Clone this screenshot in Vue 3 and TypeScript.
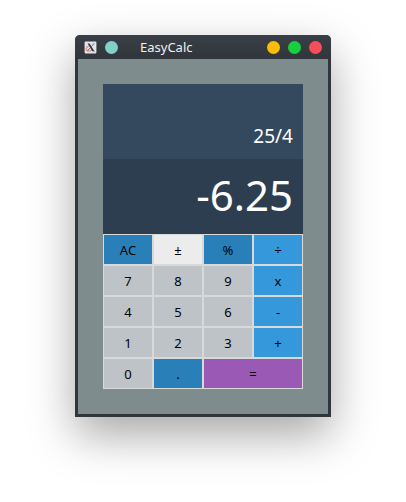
<script setup lang="ts">
interface Key {
  label: string
  kind: 'digit' | 'action' | 'sign' | 'operator' | 'equals'
}

const expression = '25/4'
const result = '-6.25'

const keys: Key[] = [
  { label: 'AC', kind: 'action' },
  { label: '±', kind: 'sign' },
  { label: '%', kind: 'action' },
  { label: '÷', kind: 'operator' },
  { label: '7', kind: 'digit' },
  { label: '8', kind: 'digit' },
  { label: '9', kind: 'digit' },
  { label: 'x', kind: 'operator' },
  { label: '4', kind: 'digit' },
  { label: '5', kind: 'digit' },
  { label: '6', kind: 'digit' },
  { label: '-', kind: 'operator' },
  { label: '1', kind: 'digit' },
  { label: '2', kind: 'digit' },
  { label: '3', kind: 'digit' },
  { label: '+', kind: 'operator' },
  { label: '0', kind: 'digit' },
  { label: '.', kind: 'action' },
  { label: '=', kind: 'equals' },
]
</script>

<template>
  <main class="desktop">
    <section class="window">
      <header class="titlebar">
        <svg class="app-icon" viewBox="0 0 13 13" aria-hidden="true">
          <rect x="0.6" y="0.6" width="11.8" height="11.8" rx="0.8" fill="#dfe5ee" />
          <path d="M4.6 5.2C2.4 6.2 1.7 8 2.6 9.3c1 1 3.4.9 5.4-.1M8.6 10.3l2.2.2" fill="none" stroke="#ea9375" stroke-width="1.3" />
          <path d="M3.6 2.4h2l4.6 7.6H8.2z" fill="#30343a" />
          <path d="M10.2 2.2 7.4 5.6M5.8 7.2 3.6 9.8" stroke="#5c6066" stroke-width="0.9" />
        </svg>
        <span class="dot pin"></span>
        <h1 class="title">EasyCalc</h1>
        <div class="controls">
          <span class="dot minimize"></span>
          <span class="dot maximize"></span>
          <span class="dot close"></span>
        </div>
      </header>
      <div class="body">
        <div class="expression">{{ expression }}</div>
        <div class="result">{{ result }}</div>
        <div class="keypad">
          <button v-for="key in keys" :key="key.label" type="button" class="key" :class="key.kind">{{ key.label }}</button>
        </div>
      </div>
    </section>
  </main>
</template>

<style>
body {
  background: #fff;
}
</style>

<style scoped>
.desktop {
  box-sizing: border-box;
  width: 406px;
  height: 502px;
  padding: 35px 75px 0;
  overflow: hidden;
  background: #fff;
  font-family: "Noto Sans", sans-serif;
}

.window {
  box-sizing: border-box;
  width: 256px;
  height: 382px;
  padding: 0 3px 3px;
  border-radius: 5px 5px 0 0;
  background: #31363b;
  box-shadow: 0 18px 46px rgba(0, 0, 0, 0.35);
}

.titlebar {
  display: flex;
  align-items: center;
  box-sizing: border-box;
  height: 24px;
  margin: 0 -3px;
  padding: 1px 9px 0;
  border-radius: 5px 5px 0 0;
  background: linear-gradient(#3a3f47, #31363b);
}

.app-icon {
  width: 13px;
  height: 13px;
}

.dot {
  width: 13px;
  height: 13px;
  border-radius: 50%;
}

.pin {
  margin-left: 8px;
  background: #7fd1c9;
}

.title {
  margin: 0 0 1px 22px;
  color: #eff0f1;
  font-size: 13px;
  font-weight: 400;
  line-height: 22px;
}

.controls {
  display: flex;
  gap: 8px;
  margin-left: auto;
}

.minimize {
  background: #fdbc09;
}

.maximize {
  background: #16d13f;
}

.close {
  background: #f54e56;
}

.body {
  box-sizing: border-box;
  height: 355px;
  padding: 25px;
  background: #7f8c8d;
}

.expression,
.result {
  box-sizing: border-box;
  height: 75px;
  padding-right: 10px;
  color: #fff;
  text-align: right;
}

.expression {
  padding-top: 39px;
  background: #34495e;
  font-size: 19px;
  line-height: 26px;
}

.result {
  padding-top: 7px;
  background: #2c3e50;
  font-size: 42px;
  line-height: 57px;
}

.keypad {
  display: grid;
  grid-template-columns: repeat(4, 50px);
  grid-auto-rows: 31px;
}

.key {
  margin: 0;
  padding: 2px 0 0;
  border: 1px solid #d9d9d9;
  border-radius: 0;
  color: #000;
  font: 13px/27px "Noto Sans", sans-serif;
}

.digit {
  background: #bdc3c7;
}

.action {
  background: #2980b9;
}

.sign {
  background: #ececec;
}

.operator {
  background: #3498db;
}

.equals {
  grid-column: span 2;
  background: #9b59b6;
}
</style>
